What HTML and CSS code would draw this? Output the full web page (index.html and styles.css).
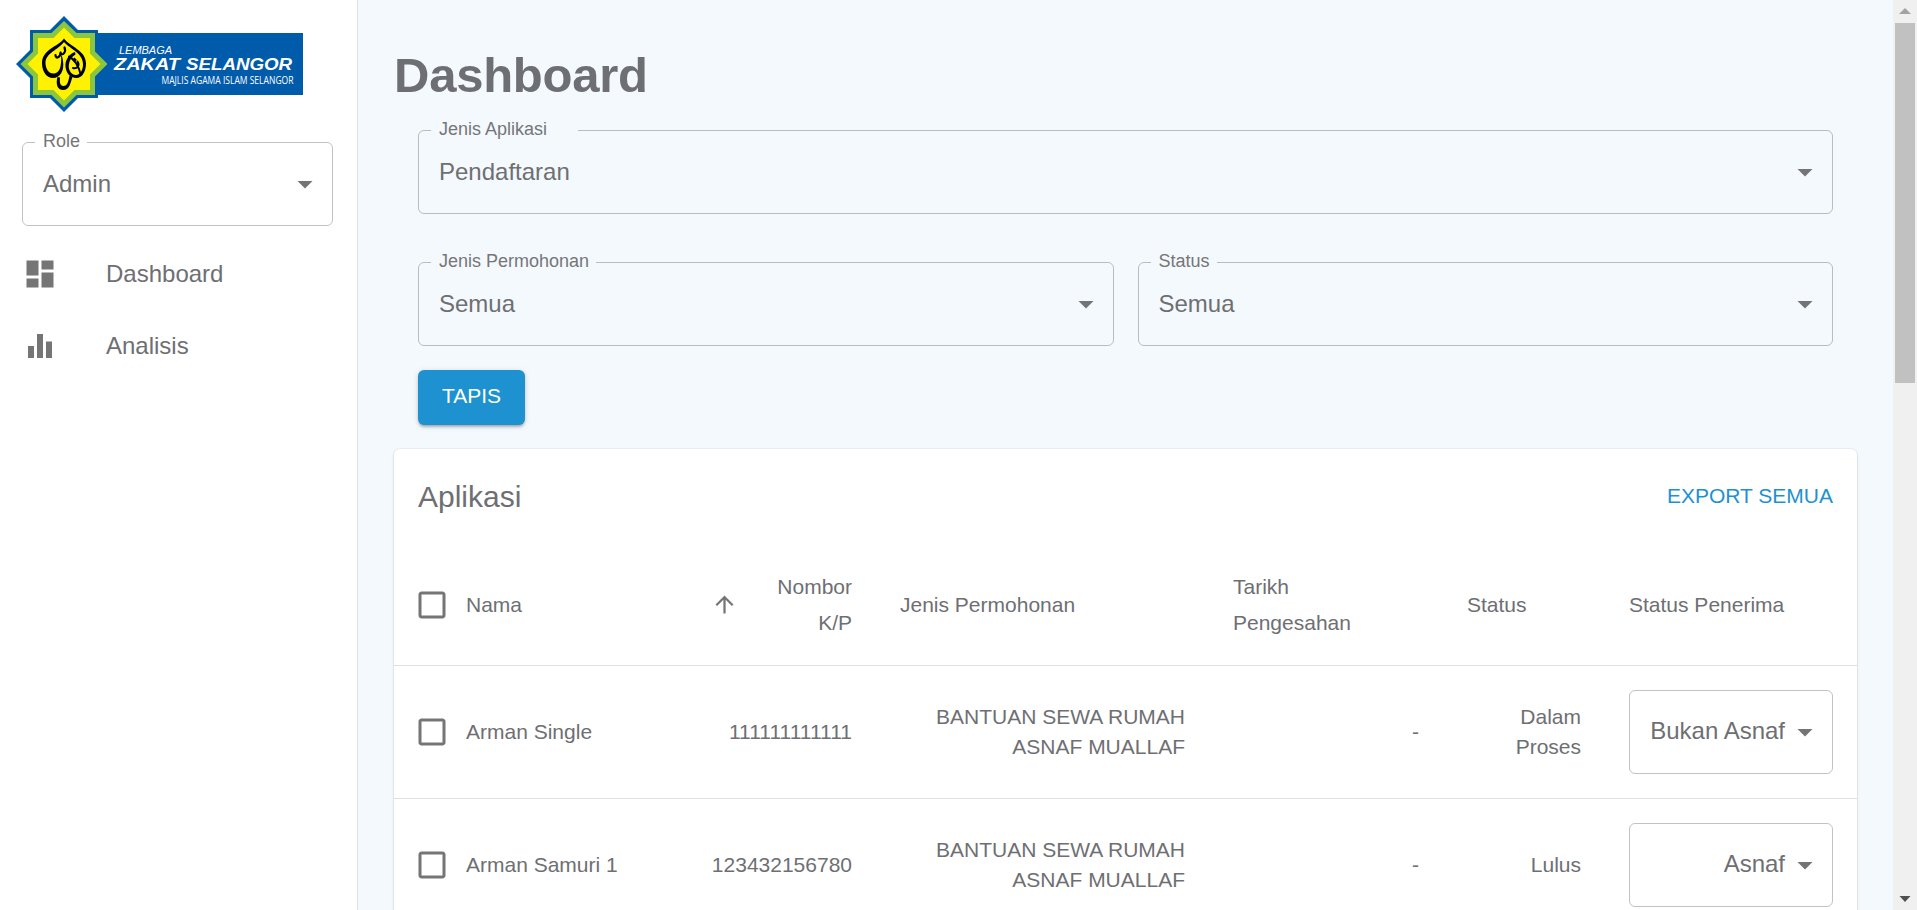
FILE: index.html
```html
<!DOCTYPE html>
<html lang="ms">
<head>
<meta charset="utf-8">
<title>Dashboard</title>
<link rel="stylesheet" href="styles.css">
</head>
<body>
<svg class="defs" width="0" height="0">
  <symbol id="caret" viewBox="0 0 24 24"><path d="M7 10l5 5 5-5z"/></symbol>
  <symbol id="box" viewBox="0 0 24 24"><path d="M19 5v14H5V5h14m0-2H5c-1.1 0-2 .9-2 2v14c0 1.1.9 2 2 2h14c1.1 0 2-.9 2-2V5c0-1.1-.9-2-2-2z"/></symbol>
</svg>
<div class="app">
  <aside class="sidebar">
    <svg class="logo" width="288" height="96" viewBox="16 16 288 96">
      <rect x="70" y="33" width="233" height="62" fill="#005bab"/>
      <path fill="#005bab" d="M64 16L78 30H98V50L112 64L98 78V98H78L64 112L50 98H30V78L16 64L30 50V30H50Z"/>
      <path fill="#8cc63f" d="M64 21L76.500 33H95V51.500L107.500 64L95 76.500V95H76.500L64 107.500L51.500 95H33V76.500L20.500 64L33 51.500V33H51.500Z"/>
      <path fill="#fff200" d="M64 27.500L74.500 38H90V53.500L100.500 64L90 74.500V90H74.500L64 100.500L53.500 90H38V74.500L27.500 64L38 53.500V38H53.500Z"/>
      <path d="M64 38.500C58 47 42 49 42 63.500C42 72 47 78 53 78C60 78 64.500 71 63 61C62.500 57 61.500 55 61 54C61.500 62 61.500 73 54 73.500C49 74 45.500 69 45.500 63C45.500 53 58 50 64 42C70 49 83 53 83 64C83 70 80.500 74.500 76 75C70 75 68 68 69 64C69.500 60 72 56.500 75.500 54.500L75 52C68 54.500 65 61 65.500 66.500C66 73 70 78 76.500 78C82.500 78 86 71 86 63.500C86 50 70 47 64 38.500Z"/>
      <path d="M57.500 77C55.500 84 57.500 90 63 90C70 90 70.500 82 72.500 77L69.500 75.500C68.500 81 67.500 86 63.500 86C60 86 59.500 82 60 77.500Z"/>
      <g fill="none" stroke="#000" stroke-linecap="round" stroke-linejoin="round">
        <path stroke-width="2.200" d="M64.500 47.500C66.500 52 62 57 60.500 52.500C60.500 57.500 55.500 59.500 55.500 55"/>
        <path stroke-width="2" d="M69 56.500C74 59 79 66 80.500 74M73 68C77.500 69 80 65 77.500 61.500"/>
      </g>
      <path d="M74.500 57.500l2.400 2.400-2.400 2.400-2.400-2.400z"/>
      <g fill="#fff" font-family="'Liberation Sans', Arial, sans-serif">
        <text x="119" y="54" font-size="10" font-style="italic" textLength="53" lengthAdjust="spacingAndGlyphs">LEMBAGA</text>
        <text x="114" y="70.300" font-size="17" font-weight="bold" font-style="italic" textLength="66" lengthAdjust="spacingAndGlyphs">ZAKAT</text>
        <text x="186" y="70.300" font-size="17" font-weight="bold" font-style="italic" textLength="106" lengthAdjust="spacingAndGlyphs">SELANGOR</text>
        <text x="161.500" y="84" font-size="10.500" font-family="'Open Sans', sans-serif" textLength="132" lengthAdjust="spacingAndGlyphs">MAJLIS AGAMA ISLAM SELANGOR</text>
      </g>
    </svg>
    <div class="select role">
      <fieldset><legend class="n-role"></legend></fieldset>
      <label>Role</label><span class="value">Admin</span><svg class="caret"><use href="#caret"/></svg>
    </div>
    <nav>
      <a class="item"><svg class="icon" viewBox="0 0 24 24"><path d="M3 13h8V3H3v10zm0 8h8v-6H3v6zm10 0h8V11h-8v10zm0-18v6h8V3h-8z"/></svg>Dashboard</a>
      <a class="item"><svg class="icon" viewBox="0 0 24 24"><path d="M10 20h4V4h-4v16zm-6 0h4v-8H4v8zM16 9v11h4V9h-4z"/></svg>Analisis</a>
    </nav>
  </aside>
  <main class="main">
    <h1>Dashboard</h1>
    <section class="filters">
      <div class="select wide">
        <fieldset><legend class="n-aplikasi"></legend></fieldset>
        <label>Jenis Aplikasi</label><span class="value">Pendaftaran</span><svg class="caret"><use href="#caret"/></svg>
      </div>
      <div class="select">
        <fieldset><legend class="n-permohonan"></legend></fieldset>
        <label>Jenis Permohonan</label><span class="value">Semua</span><svg class="caret"><use href="#caret"/></svg>
      </div>
      <div class="select">
        <fieldset><legend class="n-status"></legend></fieldset>
        <label>Status</label><span class="value">Semua</span><svg class="caret"><use href="#caret"/></svg>
      </div>
    </section>
    <button class="apply">TAPIS</button>
    <section class="card">
      <header class="card-head"><h2>Aplikasi</h2><a class="export">EXPORT SEMUA</a></header>
      <div class="row head">
        <div class="cell name"><svg class="icon"><use href="#box"/></svg>Nama<svg class="sort" viewBox="0 0 24 24"><path d="M4 12l1.410 1.410L11 7.830V20h2V7.830l5.580 5.590L20 12l-8-8-8 8z"/></svg></div>
        <div class="cell end">Nombor<br>K/P</div>
        <div class="cell">Jenis Permohonan</div>
        <div class="cell">Tarikh<br>Pengesahan</div>
        <div class="cell">Status</div>
        <div class="cell">Status Penerima</div>
      </div>
      <div class="row">
        <div class="cell name"><svg class="icon"><use href="#box"/></svg>Arman Single</div>
        <div class="cell end">111111111111</div>
        <div class="cell end">BANTUAN SEWA RUMAH<br>ASNAF MUALLAF</div>
        <div class="cell end">-</div>
        <div class="cell end">Dalam<br>Proses</div>
        <div class="cell"><div class="select right"><fieldset></fieldset><span class="value">Bukan Asnaf</span><svg class="caret"><use href="#caret"/></svg></div></div>
      </div>
      <div class="row">
        <div class="cell name"><svg class="icon"><use href="#box"/></svg>Arman Samuri 1</div>
        <div class="cell end">123432156780</div>
        <div class="cell end">BANTUAN SEWA RUMAH<br>ASNAF MUALLAF</div>
        <div class="cell end">-</div>
        <div class="cell end">Lulus</div>
        <div class="cell"><div class="select right"><fieldset></fieldset><span class="value">Asnaf</span><svg class="caret"><use href="#caret"/></svg></div></div>
      </div>
    </section>
  </main>
  <div class="scrollbar">
    <svg width="24" height="23"><path fill="#a3a3a3" d="M12 8l6 6H6z"/></svg>
    <div class="thumb"></div>
    <svg class="down" width="24" height="23"><path fill="#505050" d="M6.500 9h11L12 15z"/></svg>
  </div>
</div>
</body>
</html>
```
FILE: styles.css
```css
* { box-sizing: border-box; }
html, body { margin: 0; height: 100%; overflow: hidden; }
body {
  font-family: "Liberation Sans", Arial, sans-serif;
  font-size: 21px;
  color: #6e6f73;
}
.defs { position: absolute; }
.app { display: flex; height: 910px; background: #f4f9fd; overflow: hidden; }

.sidebar {
  flex: none;
  width: 358px;
  background: #fff;
  border-right: 1px solid #dce1e6;
}
.logo { display: block; margin: 16px 0 0 16px; overflow: visible; }
.role { margin: 30px 24px 0 22px; }
nav { margin-top: 12px; }
.item {
  display: flex;
  align-items: center;
  gap: 48px;
  height: 72px;
  padding-left: 22px;
  font-size: 24px;
}
.icon { flex: none; width: 36px; height: 36px; fill: #757575; }

/* Outlined select with a notched border */
.select { position: relative; height: 84px; font-size: 24px; }
.select fieldset {
  position: absolute;
  inset: -7px 0 0;
  margin: 0;
  padding: 0 12px;
  border: 1px solid rgba(0, 0, 0, 0.24);
  border-radius: 6px;
}
.select legend { height: 15px; padding: 0; }
.select label {
  position: absolute;
  left: 21px;
  top: -10px;
  font-size: 18px;
  line-height: 18px;
  color: #757679;
}
.select .value {
  display: block;
  padding: 0 48px 0 21px;
  line-height: 83px;
  white-space: nowrap;
}
.select .caret {
  position: absolute;
  right: 10px;
  top: 24px;
  width: 36px;
  height: 36px;
  fill: #737476;
}
.select.right { width: 100%; text-align: right; }
.select.right fieldset { top: 0; }
.select.right .value { line-height: 82px; }
.n-role { width: 52px; }
.n-aplikasi { width: 147px; }
.n-permohonan { width: 165px; }
.n-status { width: 66px; }

.main { flex: 1; padding: 36px 36px 0; }
h1 {
  margin: 0;
  font-size: 49px;
  line-height: 78px;
  letter-spacing: -0.25px;
}
.filters {
  display: grid;
  grid-template-columns: 1fr 1fr;
  gap: 48px 24px;
  padding: 16px 24px 24px;
}
.wide { grid-column: 1 / -1; }
.apply {
  display: block;
  width: 107px;
  height: 55px;
  margin-left: 24px;
  padding: 0 0 3px;
  border: 0;
  border-radius: 6px;
  background: #1e91d0;
  color: #fff;
  font: inherit;
  box-shadow: 0 3px 3px -2px rgba(0,0,0,.2), 0 2px 3px rgba(0,0,0,.14), 0 1px 6px rgba(0,0,0,.12);
}

.card {
  height: 600px;
  margin-top: 24px;
  background: #fff;
  border-radius: 6px;
  box-shadow: 0 1px 3px rgba(63, 63, 68, 0.15), 0 0 0 1px rgba(63, 63, 68, 0.05);
}
.card-head {
  display: flex;
  align-items: center;
  justify-content: space-between;
  height: 96px;
  padding: 0 24px;
}
h2 { margin: 0; font-size: 30px; font-weight: 400; }
.export { padding-bottom: 3px; color: #1e91d0; }
.row {
  display: grid;
  grid-template-columns: 312px 170px 333px 234px 162px 252px;
  align-items: center;
  height: 133px;
  border-bottom: 1px solid #e0e0e0;
  line-height: 30px;
}
.row.head { height: 121px; line-height: 36px; }
.cell { padding: 0 24px; white-space: nowrap; }
.end { padding-left: 0; text-align: right; }
.name { display: flex; align-items: center; padding: 0 0 0 20px; }
.name .icon { margin-right: 16px; }
.sort { width: 27px; height: 27px; margin: 0 -32px 2px auto; fill: #757575; }

.scrollbar {
  flex: none;
  display: flex;
  flex-direction: column;
  width: 24px;
  background: #f0f0f0;
}
.thumb { width: 20px; height: 360px; margin-left: 2px; background: #c1c1c1; }
.down { margin-top: auto; }
```
